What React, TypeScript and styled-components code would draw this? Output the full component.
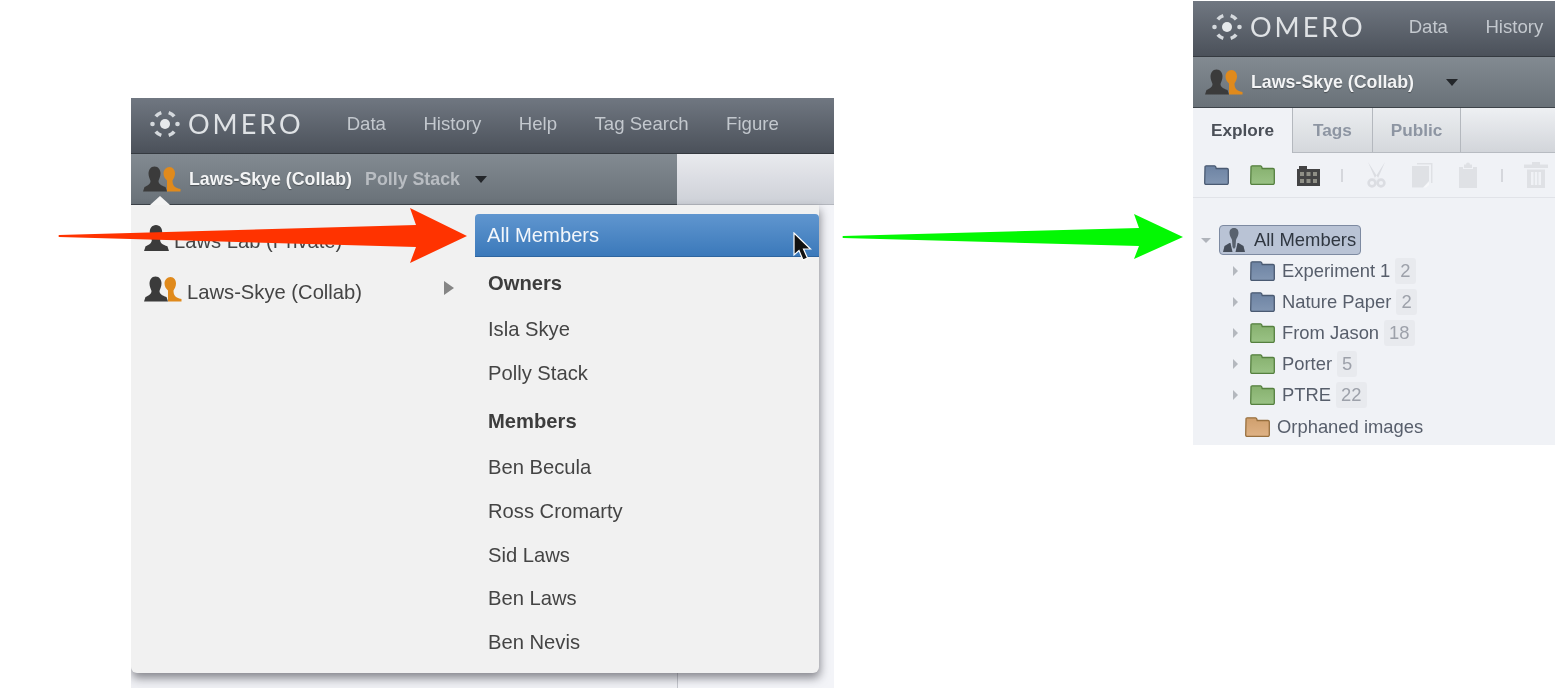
import styled, { createGlobalStyle } from "styled-components";

const GlobalStyle = createGlobalStyle`
  html, body {
    margin: 0;
    padding: 0;
    background: #fff;
  }
`;

const owners = ["Isla Skye", "Polly Stack"];
const members = ["Ben Becula", "Ross Cromarty", "Sid Laws", "Ben Laws", "Ben Nevis"];

const treeRows = [
  { name: "Experiment 1", count: 2, color: "blue" },
  { name: "Nature Paper", count: 2, color: "blue" },
  { name: "From Jason", count: 18, color: "green" },
  { name: "Porter", count: 5, color: "green" },
  { name: "PTRE", count: 22, color: "green" },
];

const folderColors: Record<string, [string, string, string]> = {
  blue: ["#6d83a3", "#8296b2", "#4a5a72"],
  green: ["#86b06e", "#9ac285", "#55803f"],
  orange: ["#cf9f6d", "#dfb285", "#98703f"],
};

const Folder = ({ color }: { color: string }) => {
  const [top, bottom, edge] = folderColors[color];
  const id = `folder-${color}`;
  return (
    <FolderSvg viewBox="0 0 25 20">
      <defs>
        <linearGradient id={id} x1="0" y1="0" x2="0" y2="1">
          <stop offset="0" stopColor={top} />
          <stop offset="1" stopColor={bottom} />
        </linearGradient>
      </defs>
      <path
        d="M1 2Q1 0.800 2.200 0.800H10.500Q11.500 0.800 11.800 2L12.200 3.500H23Q24.300 3.500 24.300 4.800V18Q24.300 19.400 23 19.400H2Q0.700 19.400 0.700 18Z"
        fill={`url(#${id})`}
        stroke={edge}
        strokeWidth="1.300"
      />
    </FolderSvg>
  );
};

const personPath =
  "M11.500 0C15.500 0 17.500 3.500 17.500 7C17.500 10.500 16 12.500 15.500 14.500C15.500 17.500 18 19 22.500 20.500L24 25H0L1.500 20.500C5 19 7.500 17.500 7.500 14.500C7 12.500 5.500 10.500 5.500 7C5.500 3.500 7.500 0 11.500 0Z";

const PersonIcon = () => (
  <PersonSvg viewBox="0 0 24 25" width="25" height="26">
    <path d={personPath} fill="#3b3b3b" />
  </PersonSvg>
);

const CollabIcon = () => (
  <PersonSvg viewBox="0 0 38 25" width="38" height="26">
    <path
      d="M26.500 0.500C30 0.500 32 3.500 32 7C32 10 30.500 12 29.500 14C29.500 18 31 21.500 37.500 22.500V25H24V14C22 12 20.500 10 20.500 7C20.500 3.500 23 0.500 26.500 0.500Z"
      fill="#e08a1c"
    />
    <path d={personPath} fill="#3b3b3b" />
  </PersonSvg>
);

const SuitIcon = () => (
  <PersonSvg viewBox="0 0 22 24" width="22" height="24">
    <path d="M11 0C14.500 0 15.500 2.500 15.500 5C15.500 8 13.500 10 13 12L12.500 19L11 21L9.500 19L9 12C8.500 10 6.500 8 6.500 5C6.500 2.500 7.500 0 11 0Z" fill="#59626e" />
    <path d="M6.500 15L1.500 18L0 24H9.500L7.500 15ZM15.500 15L20.500 18L22 24H12.500L14.500 15Z" fill="#454d59" />
  </PersonSvg>
);

const LogoMark = () => (
  <LogoSvg viewBox="0 0 30 30">
    <circle cx="15" cy="15" r="5" fill="#e6e9ec" />
    <circle cx="2.500" cy="15" r="2.300" fill="#d5d9dd" />
    <circle cx="27.500" cy="15" r="2.300" fill="#d5d9dd" />
    <g fill="none" stroke="#d5d9dd" strokeWidth="3.600">
      <path d="M5.800 7.300A12 12 0 0 1 11.300 3.600" />
      <path d="M18.700 3.600A12 12 0 0 1 24.200 7.300" />
      <path d="M5.800 22.700A12 12 0 0 0 11.300 26.400" />
      <path d="M18.700 26.400A12 12 0 0 0 24.200 22.700" />
    </g>
  </LogoSvg>
);

const AppBar = ({ links }: { links: string[] }) => (
  <TopBar>
    <LogoMark />
    <LogoText>OMERO</LogoText>
    <Nav>
      {links.map((link) => (
        <NavLink key={link}>{link}</NavLink>
      ))}
    </Nav>
  </TopBar>
);

const DropCaret = () => (
  <svg width="12" height="7" viewBox="0 0 12 7">
    <path d="M0 0H12L6 7Z" fill="#23262a" />
  </svg>
);

const LeftPanel = () => (
  <Panel $top={98} $left={0} $width={703} $height={590}>
    <AppBar links={["Data", "History", "Help", "Tag Search", "Figure"]} />
    <SubRow>
      <GroupBar $width={546}>
        <CollabIcon />
        <GroupName>Laws-Skye (Collab)</GroupName>
        <UserName>Polly Stack</UserName>
        <CaretSlot $left={15}>
          <DropCaret />
        </CaretSlot>
      </GroupBar>
      <LightBar />
    </SubRow>
    <Body>
      <BodyLeft />
      <BodyRight />
      <Menu>
        <Notch />
        <GroupList>
          <GroupItem>
            <PersonIcon />
            <span>Laws Lab (Private)</span>
          </GroupItem>
          <GroupItem>
            <CollabIcon />
            <span>Laws-Skye (Collab)</span>
            <Chevron />
          </GroupItem>
        </GroupList>
        <MemberList>
          <AllMembers>
            All Members
            <Cursor viewBox="0 0 19 29">
              <path
                d="M1 1V23L6 18.500L10 28L14.500 26L10.500 17H17.500Z"
                fill="#111"
                stroke="#fff"
                strokeWidth="1.200"
              />
            </Cursor>
          </AllMembers>
          <MemberHeading>Owners</MemberHeading>
          {owners.map((name) => (
            <MemberRow key={name}>{name}</MemberRow>
          ))}
          <MemberHeading>Members</MemberHeading>
          {members.map((name) => (
            <MemberRow key={name}>{name}</MemberRow>
          ))}
        </MemberList>
      </Menu>
    </Body>
  </Panel>
);

const RightPanel = () => (
  <Panel $top={1} $left={359} $width={362} $height={444}>
    <AppBar links={["Data", "History"]} />
    <SubRow>
      <GroupBar $width={362}>
        <CollabIcon />
        <GroupName>Laws-Skye (Collab)</GroupName>
        <CaretSlot $left={32}>
          <DropCaret />
        </CaretSlot>
      </GroupBar>
    </SubRow>
    <Tabs>
      <Tab $active $width={100}>Explore</Tab>
      <Tab $width={80}>Tags</Tab>
      <Tab $width={88}>Public</Tab>
    </Tabs>
    <Toolbar>
      <ToolCell>
        <Folder color="blue" />
      </ToolCell>
      <ToolCell>
        <Folder color="green" />
      </ToolCell>
      <ToolCell>
        <svg width="24" height="21" viewBox="0 0 24 21">
          <path d="M1 4H3V1H11V4H24V21H1Z" fill="#434344" />
          <g fill="#8f8f86">
            <rect x="4" y="7" width="4" height="4" />
            <rect x="10.500" y="7" width="4" height="4" />
            <rect x="17" y="7" width="4" height="4" />
            <rect x="4" y="14" width="4" height="4" />
            <rect x="10.500" y="14" width="4" height="4" />
            <rect x="17" y="14" width="4" height="4" />
          </g>
        </svg>
      </ToolCell>
      <ToolSep />
      <ToolCell>
        <svg width="19" height="26" viewBox="0 0 19 26">
          <path d="M1 0L11.500 16.500L9 18.500ZM18 0L7.500 16.500L10 18.500Z" fill="#dbdde2" />
          <g fill="none" stroke="#dbdde2" strokeWidth="2.600">
            <circle cx="5" cy="21" r="3.400" />
            <circle cx="14" cy="21" r="3.400" />
          </g>
        </svg>
      </ToolCell>
      <ToolCell>
        <svg width="22" height="25" viewBox="0 0 22 25">
          <path d="M6 0H21.500V20H20V1.500H6Z" fill="#dfe1e5" />
          <path d="M1 3H18V18L12 24.500H1Z" fill="#dfe1e5" />
          <path d="M18 19V22L15 24.500H12.500Z" fill="#f7f8fa" />
        </svg>
      </ToolCell>
      <ToolCell>
        <svg width="18" height="26" viewBox="0 0 18 26">
          <path d="M7 2.500Q7 0.500 9 0.500Q11 0.500 11 2.500H13V6H5V2.500Z" fill="#dfe1e5" />
          <path d="M0 5H4V7H14V5H18V26H0Z" fill="#dfe1e5" />
        </svg>
      </ToolCell>
      <ToolSep />
      <ToolCell>
        <svg width="24" height="26" viewBox="0 0 24 26">
          <path d="M8 0H16V2.500H24V6H0V2.500H8Z" fill="#dfe1e5" />
          <path fillRule="evenodd" d="M3 7.500H21V26H3ZM7 10V23H9.500V10ZM10.800 10V23H13.200V10ZM14.500 10V23H17V10Z" fill="#dfe1e5" />
        </svg>
      </ToolCell>
    </Toolbar>
    <Tree>
      <RootRow>
        <TwistDown />
        <RootPill>
          <SuitIcon />
          All Members
        </RootPill>
      </RootRow>
      {treeRows.map((row) => (
        <TreeRow key={row.name}>
          <TwistRight />
          <Folder color={row.color} />
          <TreeName>{row.name}</TreeName>
          <Count>{row.count}</Count>
        </TreeRow>
      ))}
      <TreeRow $orphan>
        <Folder color="orange" />
        <TreeName>Orphaned images</TreeName>
      </TreeRow>
    </Tree>
  </Panel>
);

const App = () => (
  <Canvas>
    <GlobalStyle />
    <LeftPanel />
    <RightPanel />
    <Arrow $left={58} $top={205} width="412" height="60" viewBox="58 205 412 60">
      <path d="M59 235L416 225L410 208L467 236L410 263L416 247L59 237Q58 236 59 235Z" fill="#ff3300" />
    </Arrow>
    <Arrow $left={842} $top={212} width="344" height="50" viewBox="842 212 344 50">
      <path d="M843 236L1139 228L1134 214L1183 237L1134 259L1139 246L843 238Q842 237 843 236Z" fill="#03f803" />
    </Arrow>
  </Canvas>
);

const Canvas = styled.div`
  position: relative;
  display: flex;
  width: 1556px;
  height: 690px;
  padding-left: 131px;
  box-sizing: border-box;
  overflow: hidden;
  background: #fff;
  font-family: "Liberation Sans", Arial, sans-serif;
`;

const Panel = styled.div<{ $top: number; $left: number; $width: number; $height: number }>`
  display: flex;
  flex-direction: column;
  flex: none;
  width: ${(p) => p.$width}px;
  height: ${(p) => p.$height}px;
  margin-top: ${(p) => p.$top}px;
  margin-left: ${(p) => p.$left}px;
  overflow: hidden;
  filter: blur(0.45px);
`;

const TopBar = styled.div`
  display: flex;
  align-items: center;
  flex: none;
  box-sizing: border-box;
  height: 56px;
  padding: 0 0 4px 19px;
  background: linear-gradient(#707781, #4b515a);
  border-bottom: 1px solid #353a40;
`;

const LogoSvg = styled.svg`
  flex: none;
  width: 30px;
  height: 30px;
`;

const LogoText = styled.span`
  margin-left: 8px;
  font-family: Lato, "Open Sans", sans-serif;
  font-weight: 400;
  font-size: 27px;
  letter-spacing: 3px;
  color: #dfe2e5;
`;

const Nav = styled.nav`
  display: flex;
  gap: 37.5px;
  margin-left: 43px;
  white-space: nowrap;
`;

const NavLink = styled.a`
  font-size: 18.6px;
  color: #c3c8ce;
`;

const SubRow = styled.div`
  display: flex;
  flex: none;
  height: 51px;
`;

const GroupBar = styled.div<{ $width: number }>`
  display: flex;
  align-items: center;
  flex: none;
  box-sizing: border-box;
  width: ${(p) => p.$width}px;
  padding-left: 12px;
  background: linear-gradient(#828a91, #697178);
  border-bottom: 1px solid #3d4349;
`;

const LightBar = styled.div`
  flex: 1;
  background: linear-gradient(#e9eaee, #cdd0d7);
  border-bottom: 1px solid #b4b7be;
`;

const PersonSvg = styled.svg`
  flex: none;
`;

const GroupName = styled.span`
  margin-left: 8px;
  font-size: 17.8px;
  font-weight: 700;
  color: #f3f4f5;
  text-shadow: 0 1px 1px rgba(0, 0, 0, 0.35);
  white-space: nowrap;
`;

const UserName = styled.span`
  margin-left: 13px;
  font-size: 17.8px;
  font-weight: 700;
  color: #b9bdc2;
  white-space: nowrap;
`;

const CaretSlot = styled.span<{ $left: number }>`
  display: flex;
  margin-left: ${(p) => p.$left}px;
`;

const Body = styled.div`
  position: relative;
  display: flex;
  flex: 1;
`;

const BodyLeft = styled.div`
  flex: none;
  width: 546px;
  background: #eff0f4;
  border-right: 1px solid #c4c6cc;
`;

const BodyRight = styled.div`
  flex: 1;
  background: #f3f4f8;
`;

const Menu = styled.div`
  position: absolute;
  top: 0;
  left: 0;
  display: flex;
  width: 688px;
  height: 468px;
  background: #f1f1f1;
  border-radius: 0 0 6px 6px;
  box-shadow: 1px 5px 10px rgba(30, 30, 40, 0.5);
`;

const Notch = styled.div`
  position: absolute;
  top: -9px;
  left: 19px;
  width: 0;
  height: 0;
  border-left: 10px solid transparent;
  border-right: 10px solid transparent;
  border-bottom: 9px solid #f4f4f4;
`;

const GroupList = styled.div`
  display: flex;
  flex-direction: column;
  flex: none;
  box-sizing: border-box;
  width: 344px;
  padding-top: 11px;
`;

const GroupItem = styled.div`
  position: relative;
  display: flex;
  align-items: center;
  gap: 5px;
  height: 51px;
  padding-left: 13px;
  font-size: 20.2px;
  color: #444;
  white-space: nowrap;

  svg {
    margin-top: -7px;
  }
`;

const Chevron = styled.i`
  position: absolute;
  top: 14px;
  left: 313px;
  border-top: 7px solid transparent;
  border-bottom: 7px solid transparent;
  border-left: 10px solid #858585;
`;

const MemberList = styled.div`
  display: flex;
  flex-direction: column;
  flex: 1;
  padding-top: 9px;
`;

const AllMembers = styled.div`
  position: relative;
  display: flex;
  align-items: center;
  flex: none;
  box-sizing: border-box;
  height: 43px;
  padding-left: 12px;
  font-size: 20.2px;
  color: #f2f6fb;
  background: linear-gradient(#6096cf, #3b79ba);
  border-radius: 4px 4px 0 0;
  border-bottom: 1px solid #2e659f;
`;

const Cursor = styled.svg`
  position: absolute;
  top: 18px;
  left: 318px;
  width: 19px;
  height: 29px;
`;

const MemberHeading = styled.div`
  display: flex;
  align-items: center;
  flex: none;
  height: 50px;
  margin-top: 1px;
  padding-left: 13px;
  font-size: 20.2px;
  font-weight: 700;
  color: #3d3d3d;
`;

const MemberRow = styled.div`
  display: flex;
  align-items: center;
  flex: none;
  height: 43.6px;
  padding-left: 13px;
  font-size: 20.2px;
  color: #444;
`;

const Tabs = styled.div`
  display: flex;
  flex: none;
  box-sizing: border-box;
  height: 45px;
  background: linear-gradient(#eef0f3, #d2d5da);
  border-bottom: 1px solid #b7bbc1;
`;

const Tab = styled.div<{ $active?: boolean; $width: number }>`
  display: flex;
  align-items: center;
  justify-content: center;
  flex: none;
  box-sizing: border-box;
  width: ${(p) => p.$width}px;
  height: ${(p) => (p.$active ? 45 : 44)}px;
  font-size: 17.2px;
  font-weight: 700;
  color: ${(p) => (p.$active ? "#4a4f57" : "#8d95a2")};
  background: ${(p) => (p.$active ? "#f0f2f6" : "linear-gradient(#ebedf0, #d5d8dc)")};
  border-right: 1px solid #b4b8be;
`;

const Toolbar = styled.div`
  display: flex;
  align-items: center;
  flex: none;
  box-sizing: border-box;
  height: 45px;
  background: #f0f2f6;
  border-bottom: 1px solid #e1e3e8;
`;

const ToolCell = styled.div`
  display: flex;
  align-items: center;
  justify-content: center;
  flex: none;
  width: 46px;
`;

const ToolSep = styled.div`
  flex: none;
  width: 2px;
  height: 13px;
  margin: 0 10px;
  background: #d5d7dc;
`;

const Tree = styled.div`
  flex: 1;
  padding-top: 27px;
  background: #f0f2f6;
  font-size: 18.4px;
  color: #575e6b;
`;

const RootRow = styled.div`
  display: flex;
  align-items: center;
  height: 30px;
  padding-left: 8px;
`;

const TwistDown = styled.i`
  margin-right: 8px;
  border-left: 5px solid transparent;
  border-right: 5px solid transparent;
  border-top: 5px solid #b0b4bb;
`;

const RootPill = styled.div`
  display: flex;
  align-items: center;
  gap: 9px;
  box-sizing: border-box;
  width: 142px;
  height: 30px;
  padding-left: 3px;
  color: #2f3640;
  background: #b9c3d5;
  border: 1px solid #7d8aa1;
  border-radius: 4px;
  white-space: nowrap;
`;

const TreeRow = styled.div<{ $orphan?: boolean }>`
  display: flex;
  align-items: center;
  height: 31.2px;
  padding-left: ${(p) => (p.$orphan ? 52 : 40)}px;
`;

const TwistRight = styled.i`
  margin-right: 12px;
  border-top: 5px solid transparent;
  border-bottom: 5px solid transparent;
  border-left: 5px solid #b4b8be;
`;

const FolderSvg = styled.svg`
  flex: none;
  width: 25px;
  height: 20px;
`;

const TreeName = styled.span`
  margin-left: 7px;
  white-space: nowrap;
`;

const Count = styled.span`
  margin-left: 5px;
  padding: 2px 5px;
  color: #9da1aa;
  background: #e8eaee;
  border-radius: 3px;
`;

const Arrow = styled.svg<{ $left: number; $top: number }>`
  position: absolute;
  left: ${(p) => p.$left}px;
  top: ${(p) => p.$top}px;
`;

export default App;
